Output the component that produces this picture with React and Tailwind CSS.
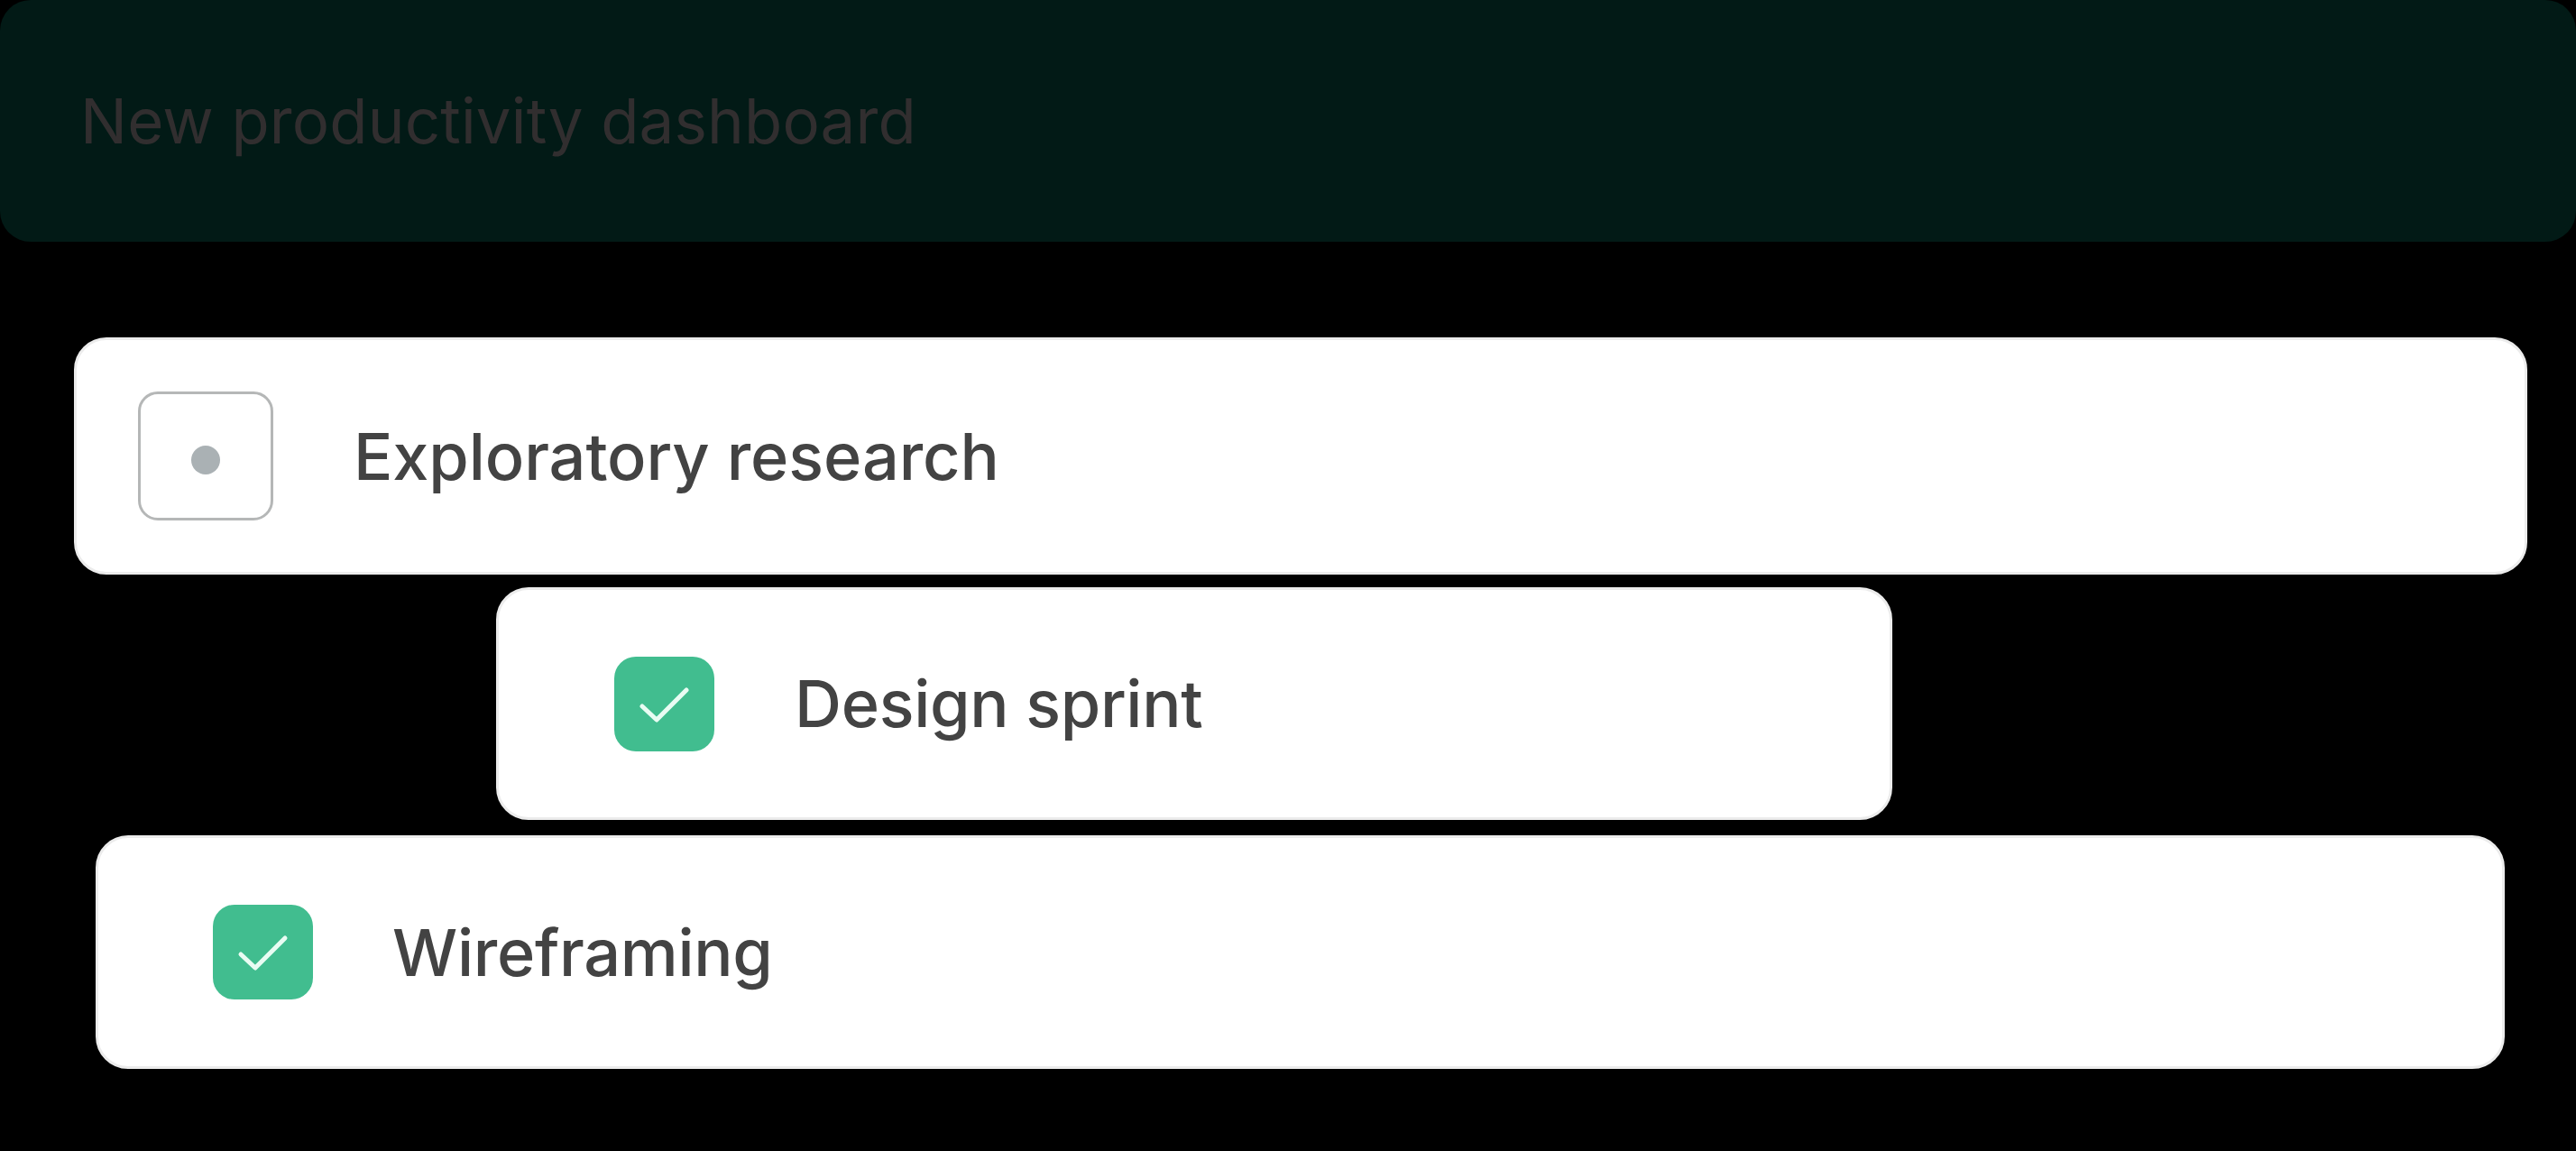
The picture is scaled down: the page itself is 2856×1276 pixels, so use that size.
import React from "react";

function Check() {
  return (
    <div className="w-[111px] h-[105px] shrink-0 rounded-[24px] bg-[#41bd8f]">
      <svg width="111" height="105" viewBox="0 0 111 105" fill="none">
        <polyline
          points="31,55 47,70 80,37"
          stroke="#e9fcf3"
          strokeWidth="5"
          strokeLinecap="round"
          strokeLinejoin="round"
        />
      </svg>
    </div>
  );
}

export default function App() {
  const font = { fontFamily: "Inter, 'Noto Sans', sans-serif" };
  return (
    <div className="min-h-screen w-full bg-black" style={font}>
      <div className="h-[268px] rounded-[34px] bg-[#021a16] flex items-center pl-[89px]">
        <span className="text-[69px] leading-none text-[#312e2f] tracking-[0.15px]">
          New productivity dashboard
        </span>
      </div>

      <div className="flex flex-col pt-[106px]">
        <div className="ml-[82px] w-[2720px] h-[263px] bg-white rounded-[36px] border-[3px] border-[#ececec] flex items-center pl-[68px] gap-[89px]">
          <div className="w-[150px] h-[143px] shrink-0 rounded-[22px] border-[3px] border-[#b5b7b7] flex items-center justify-center">
            <div className="w-[32px] h-[32px] rounded-full bg-[#aab1b4] mt-[9px]" />
          </div>
          <span className="text-[72px] leading-none font-medium text-[#434343] tracking-[-0.1px]">
            Exploratory research
          </span>
        </div>

        <div className="mt-[14px] ml-[550px] w-[1548px] h-[258px] bg-white rounded-[36px] border-[3px] border-[#ececec] flex items-center pl-[128px] gap-[89px]">
          <Check />
          <span className="text-[72px] leading-none font-medium text-[#434343] tracking-[-0.3px]">
            Design sprint
          </span>
        </div>

        <div className="mt-[17px] ml-[106px] w-[2671px] h-[259px] bg-white rounded-[36px] border-[3px] border-[#ececec] flex items-center pl-[127px] gap-[88px]">
          <Check />
          <span className="text-[72px] leading-none font-medium text-[#434343] tracking-[-0.3px]">
            Wireframing
          </span>
        </div>
      </div>
    </div>
  );
}
